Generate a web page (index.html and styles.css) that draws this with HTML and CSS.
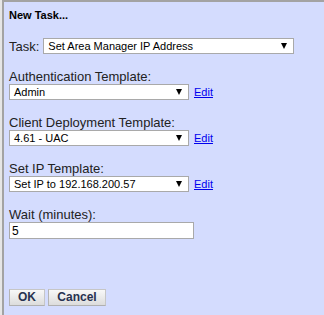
FILE: index.html
```html
<!DOCTYPE html>
<html lang="en">
<head>
    <meta charset="UTF-8">
    <title>New Task</title>
    <link rel="stylesheet" href="styles.css">
</head>
<body>
    <div class="dialog">
        <h1 class="dialog-title">New Task...</h1>

        <div class="task-row">
            <span class="label">Task:</span>
            <div class="select select-wide">
                <span>Set Area Manager IP Address</span>
                <span class="arrow"></span>
            </div>
        </div>

        <div class="field">
            <label class="label">Authentication Template:</label>
            <div class="field-row">
                <div class="select">
                    <span>Admin</span>
                    <span class="arrow"></span>
                </div>
                <a href="#" class="edit">Edit</a>
            </div>
        </div>

        <div class="field">
            <label class="label">Client Deployment Template:</label>
            <div class="field-row">
                <div class="select">
                    <span>4.61 - UAC</span>
                    <span class="arrow"></span>
                </div>
                <a href="#" class="edit">Edit</a>
            </div>
        </div>

        <div class="field">
            <label class="label">Set IP Template:</label>
            <div class="field-row">
                <div class="select">
                    <span>Set IP to 192.168.200.57</span>
                    <span class="arrow"></span>
                </div>
                <a href="#" class="edit">Edit</a>
            </div>
        </div>

        <div class="field">
            <label class="label">Wait (minutes):</label>
            <input class="text-input" type="text" value="5">
        </div>

        <div class="buttons">
            <button class="btn btn-ok">OK</button>
            <button class="btn">Cancel</button>
        </div>
    </div>
</body>
</html>
```

FILE: styles.css
```css
body {
    margin: 0;
    padding: 0;
    background: #e6e6e6;
    overflow: hidden;
    font-family: 'Liberation Sans', Arial, sans-serif;
}

.dialog {
    margin-left: 2px;
    height: 310px;
    padding: 7px 5px 0;
    background: #d4dcfe;
    border-top: 2px solid #a3a3a3;
    border-left: 2px solid #a3a3a3;
    border-bottom: 2px solid #a3a3a3;
}

.dialog-title {
    margin: 0;
    font-size: 11px;
    line-height: 13px;
    font-weight: bold;
    color: #000;
}

.label {
    display: block;
    font-size: 13px;
    line-height: 15px;
    color: #222;
}

.task-row {
    margin-top: 16px;
    display: flex;
    align-items: center;
}

.task-row .label {
    margin-right: 4px;
}

.field {
    margin-top: 15px;
}

.field-row {
    display: flex;
    align-items: center;
}

.select {
    box-sizing: border-box;
    width: 180px;
    height: 16px;
    padding: 0 6px 0 4px;
    display: flex;
    align-items: center;
    justify-content: space-between;
    background: #fff;
    border: 1px solid #a9a9a9;
    font-size: 11px;
    color: #000;
}

.select-wide {
    width: 251px;
}

.arrow {
    width: 0;
    height: 0;
    border-left: 3.5px solid transparent;
    border-right: 3.5px solid transparent;
    border-top: 6px solid #000;
}

.edit {
    margin-left: 5px;
    font-size: 11px;
    color: #0000ee;
    text-decoration: underline;
}

.text-input {
    box-sizing: border-box;
    display: block;
    width: 185px;
    height: 17px;
    margin: 0;
    padding: 0 2px;
    border: 1px solid #a9a9a9;
    background: #fff;
    font-family: 'Liberation Sans', Arial, sans-serif;
    font-size: 12px;
    color: #000;
    outline: none;
}

.buttons {
    margin-top: 50px;
    display: flex;
    gap: 3px;
}

.btn {
    box-sizing: border-box;
    height: 17px;
    width: 58px;
    margin: 0;
    padding: 0;
    border: 1px solid #c6c6c6;
    border-left-color: #b4b4b4;
    border-bottom-color: #b0b0b0;
    background: linear-gradient(#f8f8f8, #dcdcdc);
    font-family: 'Liberation Sans', Arial, sans-serif;
    font-size: 12px;
    font-weight: bold;
    line-height: 15px;
    color: #273150;
}

.btn-ok {
    width: 36px;
}
```
